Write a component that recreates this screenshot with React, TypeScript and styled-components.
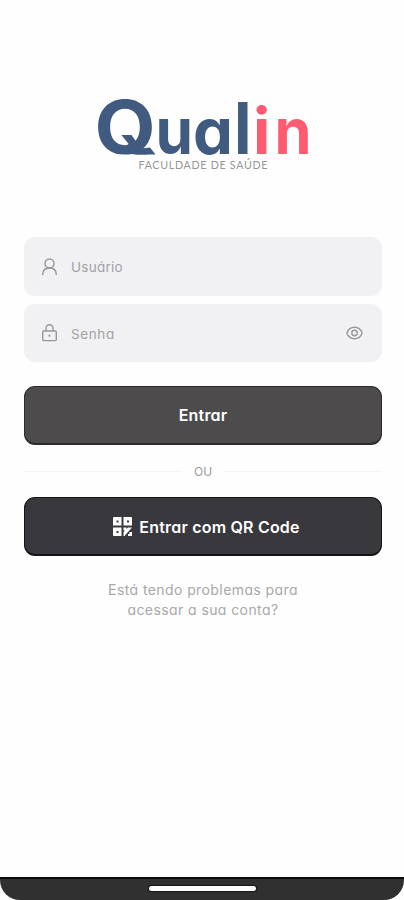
import React from "react";
import styled, { createGlobalStyle } from "styled-components";

const GlobalStyle = createGlobalStyle`
  * { box-sizing: border-box; }
  body { margin: 0; background: #fefefe; }
`;

const Screen = styled.main`
  display: flex;
  flex-direction: column;
  width: 100%;
  height: 900px;
  background: #fefefe;
  font-family: Inter, "Noto Sans", sans-serif;
  font-feature-settings: "cv11" 1;
`;

const LogoArea = styled.header`
  height: 237px;
  padding: 70px 0 0 90px;
`;

const Form = styled.section`
  display: flex;
  flex-direction: column;
  padding: 0 22px 0 24px;
`;

const Field = styled.label`
  display: flex;
  align-items: center;
  height: 59px;
  padding: 0 18px 0 16px;
  border-radius: 11px;
  background: #f1f1f3;
  color: #98989b;

  & + & {
    height: 58px;
    margin-top: 8px;
  }
`;

const FieldText = styled.span<{ $spacing: number }>`
  flex: 1;
  margin-left: 12px;
  padding-top: 1px;
  font-size: 13.5px;
  letter-spacing: ${(p) => p.$spacing}px;
  color: #a2a2a5;
`;

const Button = styled.button<{ $qr?: boolean }>`
  display: flex;
  align-items: center;
  justify-content: center;
  gap: 7px;
  height: 59px;
  margin: 0;
  padding: ${(p) => (p.$qr ? "1px 0 0 7px" : "0")};
  border: 1px solid ${(p) => (p.$qr ? "#141318" : "#2c2a2c")};
  border-bottom-width: 2px;
  border-radius: 11px;
  background: ${(p) => (p.$qr ? "#39383d" : "#4d4b4c")};
  color: #fff;
  font: 600 16px Inter, "Noto Sans", sans-serif;
  font-feature-settings: inherit;
  letter-spacing: 0.2px;
`;

const Submit = styled.div`
  display: grid;
  margin-top: 24px;
`;

const Divider = styled.div`
  display: flex;
  align-items: center;
  gap: 12px;
  height: 52px;
  font-size: 12px;
  color: #9a9a9a;

  &::before,
  &::after {
    content: "";
    flex: 1;
    height: 1px;
    background: #f3f3f3;
  }
`;

const Help = styled.p`
  margin: 24px 0 0;
  text-align: center;
  font-size: 14px;
  line-height: 20px;
  letter-spacing: 0.41px;
  color: #a8a8a8;
`;

const NavBar = styled.footer`
  display: flex;
  justify-content: center;
  height: 23px;
  margin-top: auto;
  padding-top: 7px;
  border-top: 2px solid #0c0c0c;
  border-radius: 0 0 20px 20px;
  background: #303030;
`;

const HomeHandle = styled.div`
  width: 107px;
  height: 5px;
  border-radius: 3px;
  background: #fff;
  box-shadow: 0 0 1px 1px #171717;
`;

const Logo = () => (
  <svg width="225" height="110" viewBox="90 70 225 110" role="img" aria-label="Qualin Faculdade de Saúde">
    <defs>
      <clipPath id="baseline">
        <rect x="90" y="70" width="225" height="84.500" />
      </clipPath>
    </defs>
    <g fontFamily="Inter, sans-serif" fontWeight="700" fontSize="64">
      <g fill="#405a80">
        <g clipPath="url(#baseline)">
          <text x="94.500" y="153.500" fontSize="74" textLength="61.500" lengthAdjust="spacingAndGlyphs">Q</text>
        </g>
        <path d="M128 150l22-2.500 5.500 7H134Z" />
        <text x="155.500" y="153.500" textLength="37.500" lengthAdjust="spacingAndGlyphs">u</text>
        <text x="193" y="153.500" textLength="40" lengthAdjust="spacingAndGlyphs">a</text>
        <text x="234" y="153.500" fontSize="71" textLength="17.500" lengthAdjust="spacingAndGlyphs">l</text>
      </g>
      <g fill="#fd5c70">
        <text x="253" y="153.500">i</text>
        <text x="274.500" y="153.500" textLength="37" lengthAdjust="spacingAndGlyphs">n</text>
      </g>
    </g>
    <text x="138.500" y="169" fontFamily="Lato, sans-serif" fontSize="10.700" fill="#969696" textLength="129">
      FACULDADE DE SAÚDE
    </text>
  </svg>
);

const UserIcon = () => (
  <svg width="19" height="20" viewBox="0 0 19 20" fill="none" stroke="currentColor" strokeWidth="1.5" strokeLinecap="round">
    <circle cx="9.5" cy="6.5" r="4.5" />
    <path d="M2.7 17.5c0-4.2 2.6-6.6 6.8-6.6s6.8 2.4 6.8 6.6" />
  </svg>
);

const LockIcon = () => (
  <svg width="19" height="20" viewBox="0 0 19 20" fill="none" stroke="currentColor" strokeWidth="1.4" strokeLinejoin="round">
    <rect x="2.7" y="8" width="13.6" height="9.6" rx="1" />
    <path d="M6 8V5.3a3.5 3.5 0 0 1 7 0V8" />
    <circle cx="9.5" cy="12.7" r="1.1" fill="currentColor" stroke="none" />
  </svg>
);

const EyeIcon = () => (
  <svg width="19" height="18" viewBox="0 0 19 18" fill="none" stroke="currentColor" strokeWidth="1.4">
    <path d="M1.8 9C3.2 5.2 6 3.2 9.5 3.2S15.8 5.2 17.2 9c-1.4 3.8-4.2 5.8-7.7 5.8S3.2 12.8 1.8 9Z" strokeLinejoin="round" />
    <circle cx="9.5" cy="9" r="2.7" />
  </svg>
);

const QrIcon = () => (
  <svg width="19" height="19" viewBox="0 0 19 19" fill="#fff">
    <path fillRule="evenodd" d="M1 0h7.5v8.5H0V1a1 1 0 0 1 1-1Zm2.5 3.5v2h2v-2ZM10.5 0H18a1 1 0 0 1 1 1v7.5h-8.5Zm3.5 3.5v2h2v-2ZM0 10.5h8.5V19H1a1 1 0 0 1-1-1Zm3.5 3.5v2h2v-2Z" />
    <path d="M10.5 10.5h3v3h-3ZM15 10.5h4L11.5 19h-1v-4ZM16.5 15H19v4h-4v-2h1.5Z" />
  </svg>
);

export default function App() {
  return (
    <>
      <GlobalStyle />
      <Screen>
        <LogoArea><Logo /></LogoArea>
        <Form>
          <Field><UserIcon /><FieldText $spacing={0.25}>Usuário</FieldText></Field>
          <Field><LockIcon /><FieldText $spacing={0.6}>Senha</FieldText><EyeIcon /></Field>
          <Submit><Button>Entrar</Button></Submit>
          <Divider>OU</Divider>
          <Button $qr><QrIcon />Entrar com QR Code</Button>
          <Help>Está tendo problemas para<br />acessar a sua conta?</Help>
        </Form>
        <NavBar><HomeHandle /></NavBar>
      </Screen>
    </>
  );
}
